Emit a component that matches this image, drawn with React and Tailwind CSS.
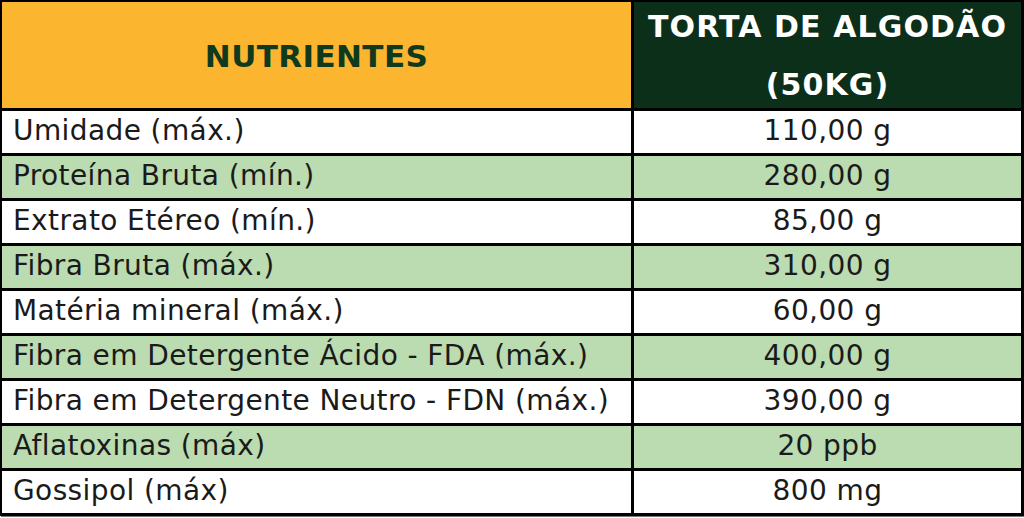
const rows = [
  ["Umidade (máx.)", "110,00 g"],
  ["Proteína Bruta (mín.)", "280,00 g"],
  ["Extrato Etéreo (mín.)", "85,00 g"],
  ["Fibra Bruta (máx.)", "310,00 g"],
  ["Matéria mineral (máx.)", "60,00 g"],
  ["Fibra em Detergente Ácido - FDA (máx.)", "400,00 g"],
  ["Fibra em Detergente Neutro - FDN (máx.)", "390,00 g"],
  ["Aflatoxinas (máx)", "20 ppb"],
  ["Gossipol (máx)", "800 mg"],
];

export default function App() {
  return (
    <div className="w-[1024px] h-[518px] bg-white font-['DejaVu_Sans',sans-serif]">
      <div className="grid grid-cols-[629px_1fr] gap-[3px] bg-black pt-[2px] pl-[2px] pr-[3px] pb-[3px] shadow-[1px_1px_0_#777]">
        <div className="h-[106px] bg-[#fbb52f] flex items-center justify-center">
          <span className="text-[31px] font-bold tracking-[0.4px] text-[#0f3a1e] leading-none pt-[2px]">
            NUTRIENTES
          </span>
        </div>
        <div className="h-[106px] bg-[#0c2f1a] flex flex-col items-center justify-center text-white text-[30px] font-bold tracking-[1.1px] leading-[58px] pt-[2px]">
          <span>TORTA DE ALGODÃO</span>
          <span>(50KG)</span>
        </div>
        {rows.map(([name, value], i) => {
          const bg = i % 2 === 1 ? "bg-[#bbdbb0]" : "bg-white";
          return [
            <div
              key={name}
              className={`${bg} h-[42px] flex items-center pl-[11px] text-[28px] tracking-[0.4px] text-[#1a1a1a] leading-none pb-[3px]`}
            >
              {name}
            </div>,
            <div
              key={value}
              className={`${bg} h-[42px] flex items-center justify-center text-[28px] tracking-[0.4px] text-[#1a1a1a] leading-none pb-[3px]`}
            >
              {value}
            </div>,
          ];
        })}
      </div>
    </div>
  );
}
